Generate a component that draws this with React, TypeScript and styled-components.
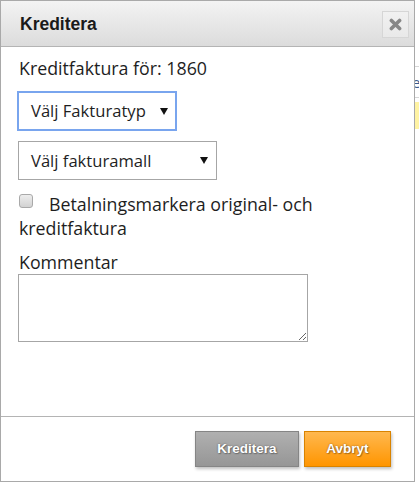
import React from "react";
import styled, { createGlobalStyle } from "styled-components";

const Global = createGlobalStyle`
  html, body { margin: 0; padding: 0; background: #ffffff; }
  body { font-family: "Open Sans", "Liberation Sans", sans-serif; color: #1e1e1e; }
  * { box-sizing: border-box; }
`;

const Page = styled.div`
  position: relative;
  width: 419px;
  height: 485px;
  overflow: hidden;
`;

const BgTable = styled.div`
  padding-top: 66px;
  display: flex;
  flex-direction: column;
`;

const BgRow = styled.div<{ $yellow?: boolean; $height: number; $lined?: boolean }>`
  display: grid;
  grid-template-columns: 412px 1fr;
  align-items: center;
  height: ${(p) => p.$height}px;
  background: ${(p) => (p.$yellow ? "#fff3a3" : "transparent")};
  border-top: ${(p) => (p.$lined ? "1px solid #d6d6d6" : "none")};
  border-bottom: ${(p) => (p.$lined ? "1px solid #d6d6d6" : "none")};
  margin-bottom: ${(p) => (p.$lined ? 4 : 0)}px;
  font-size: 15px;
  color: #3a5a8c;
`;

const Dialog = styled.div`
  position: absolute;
  top: 0;
  left: 0;
  width: 415px;
  height: 482px;
  border: 1px solid #a9a9a9;
  background: #ffffff;
  display: flex;
  flex-direction: column;
`;

const Header = styled.div`
  height: 46px;
  flex: none;
  border-bottom: 1px solid #b4b4b4;
  background: linear-gradient(#f3f3f3, #dcdcdc);
  display: flex;
  align-items: center;
  justify-content: space-between;
  padding: 0 5px 0 19px;
`;

const Title = styled.h1`
  margin: 0;
  font-family: "Liberation Sans", Arial, sans-serif;
  font-weight: bold;
  font-size: 17.5px;
  color: #1a1a1a;
  padding-top: 1px;
`;

const CloseButton = styled.button`
  width: 27px;
  height: 27px;
  padding: 0;
  margin-top: 2px;
  border: 1px solid #d6d6d6;
  background: linear-gradient(#f1f1f1, #e9e9e9);
  display: flex;
  align-items: center;
  justify-content: center;
  cursor: pointer;
`;

const Body = styled.div`
  flex: 1;
  padding: 9px 18px 0 18px;
  display: flex;
  flex-direction: column;
  font-size: 17.8px;
  line-height: 24px;
`;

const InfoLine = styled.div`
  margin: 0;
`;

const Stack = styled.div<{ $gap: number; $top: number }>`
  display: flex;
  flex-direction: column;
  align-items: flex-start;
  gap: ${(p) => p.$gap}px;
  margin-top: ${(p) => p.$top}px;
`;

const SelectBox = styled.div<{ $width: number; $focused?: boolean }>`
  width: ${(p) => p.$width}px;
  height: ${(p) => (p.$focused ? 40 : 39)}px;
  margin-left: ${(p) => (p.$focused ? -2 : -1)}px;
  border: ${(p) => (p.$focused ? "2px solid #79a5ee" : "1px solid #a6a6a6")};
  background: #fff;
  display: flex;
  align-items: center;
  justify-content: space-between;
  padding: 0 ${(p) => (p.$focused ? 7 : 8)}px 0 12px;
  font-size: 16.6px;
  color: #1e1e1e;
`;

const CheckRow = styled.label`
  display: block;
  margin-top: 12px;
  line-height: 24px;
`;

const CheckBox = styled.span`
  display: inline-block;
  width: 14px;
  height: 14px;
  border: 1px solid #a9a9a9;
  border-radius: 3px;
  background: linear-gradient(#ededed, #d2d2d2);
  margin: 2px 16px 0 0;
  vertical-align: top;
`;

const FieldLabel = styled.div`
  margin-top: 11px;
  line-height: 23px;
`;

const TextArea = styled.textarea`
  display: block;
  width: 290px;
  height: 68px;
  margin: 0 0 0 -1px;
  border: 1px solid #a6a6a6;
  resize: both;
  font-family: inherit;
  font-size: 14px;
`;

const Footer = styled.div`
  height: 65px;
  flex: none;
  border-top: 1px solid #b4b4b4;
  display: flex;
  align-items: center;
  justify-content: flex-end;
  gap: 5px;
  padding: 0 23px 1px 0;
`;

const ActionButton = styled.button<{ $variant: "gray" | "orange"; $width: number }>`
  width: ${(p) => p.$width}px;
  height: 36px;
  font-family: "Liberation Sans", Arial, sans-serif;
  font-weight: bold;
  font-size: 13.5px;
  color: #fff;
  text-shadow: 0 0 2px rgba(0, 0, 0, 0.45), 1px 1px 1px rgba(0, 0, 0, 0.25);
  border: 1px solid ${(p) => (p.$variant === "gray" ? "#858585" : "#d98300")};
  background: ${(p) =>
    p.$variant === "gray"
      ? "linear-gradient(#b0b0b0, #969696)"
      : "linear-gradient(#ffb84f, #ff9500)"};
  box-shadow: 1px 2px 3px rgba(0, 0, 0, 0.25);
  cursor: pointer;
  padding: 0;
`;

const Arrow = () => (
  <svg width="8" height="7" viewBox="0 0 8 7">
    <path d="M0 0 H8 L4 7 Z" fill="#111" />
  </svg>
);

const CloseIcon = () => (
  <svg width="13" height="13" viewBox="0 0 13 13">
    <path d="M2.4 2.4 L10.6 10.6 M10.6 2.4 L2.4 10.6" stroke="#878787" strokeWidth="3.6" strokeLinecap="round" />
  </svg>
);

export default function App() {
  return (
    <>
      <Global />
      <Page>
        <BgTable>
          <BgRow $height={32} $lined>
            <span />
            <span>e</span>
          </BgRow>
          <BgRow $height={27} $yellow>
            <span />
            <span />
          </BgRow>
        </BgTable>
        <Dialog>
          <Header>
            <Title>Kreditera</Title>
            <CloseButton aria-label="Stäng">
              <CloseIcon />
            </CloseButton>
          </Header>
          <Body>
            <InfoLine>Kreditfaktura för: 1860</InfoLine>
            <Stack $gap={10} $top={11}>
              <SelectBox $width={160} $focused>
                <span>Välj Fakturatyp</span>
                <Arrow />
              </SelectBox>
              <SelectBox $width={199}>
                <span>Välj fakturamall</span>
                <Arrow />
              </SelectBox>
            </Stack>
            <CheckRow>
              <CheckBox />
              Betalningsmarkera original- och kreditfaktura
            </CheckRow>
            <FieldLabel>Kommentar</FieldLabel>
            <TextArea />
          </Body>
          <Footer>
            <ActionButton $variant="gray" $width={104}>Kreditera</ActionButton>
            <ActionButton $variant="orange" $width={87}>Avbryt</ActionButton>
          </Footer>
        </Dialog>
      </Page>
    </>
  );
}
